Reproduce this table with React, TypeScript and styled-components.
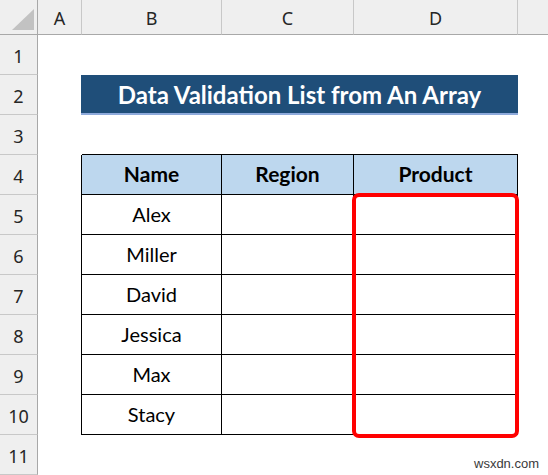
import React from "react";
import styled, { createGlobalStyle } from "styled-components";

const Global = createGlobalStyle`
  html, body { margin: 0; padding: 0; background: #ffffff; overflow: hidden; }
  #root { width: 548px; height: 475px; }
`;

const COLS = [38, 44, 140, 132, 164, 30];
const ROW_H = 40;

const Sheet = styled.div`
  position: relative;
  width: 548px;
  height: 475px;
  overflow: hidden;
  display: grid;
  grid-template-columns: ${COLS.map((c) => c + "px").join(" ")};
  grid-template-rows: 35px repeat(11, ${ROW_H}px);
  background: #ffffff;
`;

const Corner = styled.div`
  background: #efefef;
  border-right: 1px solid #a8a8a8;
  border-bottom: 1px solid #a8a8a8;
  box-sizing: border-box;
  display: flex;
  align-items: flex-end;
  justify-content: flex-end;
  padding: 0 3px 4px 0;
`;

const Triangle = styled.div`
  width: 22px;
  height: 21px;
  background: #c2c2c2;
  clip-path: polygon(100% 0, 100% 100%, 0 100%);
`;

const ColHead = styled.div<{ $last?: boolean }>`
  background: #efefef;
  box-sizing: border-box;
  border-bottom: 1px solid #a8a8a8;
  border-right: ${(p) => (p.$last ? "none" : "1px solid #c8c8c8")};
  display: flex;
  align-items: center;
  justify-content: center;
  font-family: "Noto Sans", "Open Sans", sans-serif;
  font-size: 18px;
  color: #262626;
  padding-top: 2px;
`;

const RowHead = styled.div`
  background: #efefef;
  box-sizing: border-box;
  border-right: 1px solid #a8a8a8;
  border-bottom: 1px solid #c8c8c8;
  display: flex;
  align-items: center;
  justify-content: center;
  font-family: "Noto Sans", "Open Sans", sans-serif;
  font-size: 18px;
  color: #262626;
  padding-top: 2px;
`;

const Cell = styled.div<{ $r?: boolean; $b?: boolean; $fill?: string; $bold?: boolean }>`
  box-sizing: border-box;
  border-right: ${(p) => (p.$r ? "1px solid #000" : "none")};
  border-bottom: ${(p) => (p.$b ? "1px solid #000" : "none")};
  background: ${(p) => p.$fill || "transparent"};
  display: flex;
  align-items: center;
  justify-content: center;
  font-family: "Lato", "Open Sans", sans-serif;
  font-size: ${(p) => (p.$bold ? "21px" : "20px")};
  font-weight: ${(p) => (p.$bold ? 700 : 400)};
  color: #000;
  padding-bottom: 2px;
`;

const Title = styled.div`
  grid-column: 3 / span 3;
  box-sizing: border-box;
  background: #1f4e79;
  border-bottom: 2px solid #8eaadb;
  margin-left: -1px;
  display: flex;
  align-items: center;
  justify-content: center;
  font-family: "Lato", "Open Sans", sans-serif;
  font-weight: 700;
  font-size: 24px;
  color: #ffffff;
  padding-top: 1px;
`;

const Highlight = styled.div`
  position: absolute;
  left: 352px;
  top: 193px;
  width: 167px;
  height: 245px;
  box-sizing: border-box;
  border: 4px solid #ff0000;
  border-radius: 7px;
  pointer-events: none;
`;

const Watermark = styled.div`
  position: absolute;
  left: 474px;
  top: 456px;
  font-family: "Liberation Sans", Arial, sans-serif;
  font-size: 13px;
  color: #3a3a3a;
`;

const names = ["Alex", "Miller", "David", "Jessica", "Max", "Stacy"];
const headers = ["Name", "Region", "Product"];
const colLetters = ["A", "B", "C", "D", ""];

export default function App() {
  const rows: React.ReactNode[] = [];
  for (let r = 1; r <= 11; r++) {
    rows.push(<RowHead key={"rh" + r}>{r}</RowHead>);
    if (r === 2) {
      rows.push(<Cell key={"c2a"} />);
      rows.push(<Title key="title">Data Validation List from An Array</Title>);
      rows.push(<Cell key={"c2e"} />);
      continue;
    }
    const inTable = r >= 4 && r <= 10;
    for (let c = 0; c < 5; c++) {
      const isTableCol = c >= 1 && c <= 3;
      const right = inTable && c >= 0 && c <= 3;
      const bottom = r >= 3 && r <= 10 && isTableCol;
      let text: string | null = null;
      let bold = false;
      let fill: string | undefined;
      if (r === 4 && isTableCol) {
        text = headers[c - 1];
        bold = true;
        fill = "#bdd7ee";
      } else if (r >= 5 && r <= 10 && c === 1) {
        text = names[r - 5];
      }
      rows.push(
        <Cell key={`c${r}-${c}`} $r={right} $b={bottom} $bold={bold} $fill={fill}>
          {text}
        </Cell>
      );
    }
  }
  return (
    <>
      <Global />
      <Sheet>
        <Corner>
          <Triangle />
        </Corner>
        {colLetters.map((l, i) => (
          <ColHead key={"ch" + i} $last={i === 4}>
            {l}
          </ColHead>
        ))}
        {rows}
        <Highlight />
        <Watermark>wsxdn.com</Watermark>
      </Sheet>
    </>
  );
}
